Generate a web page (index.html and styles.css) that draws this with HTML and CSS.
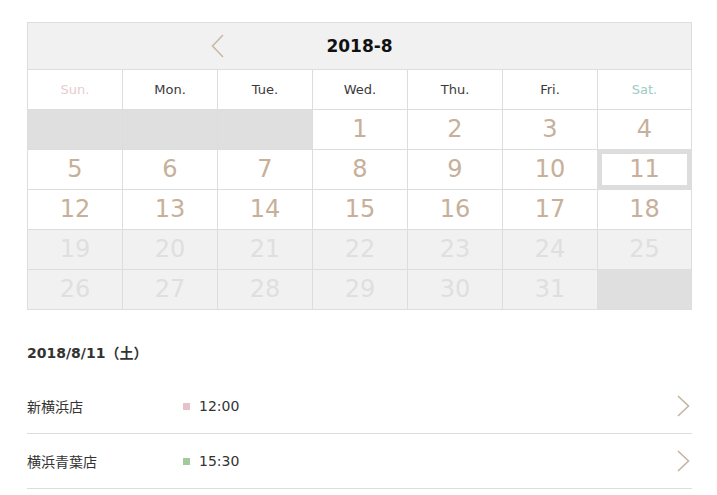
FILE: index.html
```html
<!DOCTYPE html>
<html lang="ja">
<head>
<meta charset="utf-8">
<title>Calendar</title>
<link rel="stylesheet" href="styles.css">
</head>
<body>
<div class="page">
  <div class="calendar">
    <div class="cal-head">
      <span class="nav">
        <svg width="13" height="24" viewBox="0 0 13 24"><polyline points="12,1 1.5,12 12,23" fill="none" stroke="#c9b9a7" stroke-width="1.6"/></svg>
      </span>
      <span class="title">2018-8</span>
      <span class="nav hidden">
        <svg width="13" height="24" viewBox="0 0 13 24"><polyline points="1,1 11.5,12 1,23" fill="none" stroke="#c9b9a7" stroke-width="1.6"/></svg>
      </span>
    </div>
    <div class="grid">
      <div class="dow sun">Sun.</div>
      <div class="dow">Mon.</div>
      <div class="dow">Tue.</div>
      <div class="dow">Wed.</div>
      <div class="dow">Thu.</div>
      <div class="dow">Fri.</div>
      <div class="dow sat">Sat.</div>

      <div class="day blank"></div>
      <div class="day blank"></div>
      <div class="day blank"></div>
      <div class="day">1</div>
      <div class="day">2</div>
      <div class="day">3</div>
      <div class="day">4</div>

      <div class="day">5</div>
      <div class="day">6</div>
      <div class="day">7</div>
      <div class="day">8</div>
      <div class="day">9</div>
      <div class="day">10</div>
      <div class="day selected">11</div>

      <div class="day">12</div>
      <div class="day">13</div>
      <div class="day">14</div>
      <div class="day">15</div>
      <div class="day">16</div>
      <div class="day">17</div>
      <div class="day">18</div>

      <div class="day off">19</div>
      <div class="day off">20</div>
      <div class="day off">21</div>
      <div class="day off">22</div>
      <div class="day off">23</div>
      <div class="day off">24</div>
      <div class="day off">25</div>

      <div class="day off">26</div>
      <div class="day off">27</div>
      <div class="day off">28</div>
      <div class="day off">29</div>
      <div class="day off">30</div>
      <div class="day off">31</div>
      <div class="day blank"></div>
    </div>
  </div>

  <div class="date-head">2018/8/11（土）</div>

  <ul class="list">
    <li class="row">
      <span class="store">新横浜店</span>
      <span class="mark pink"></span>
      <span class="time">12:00</span>
      <svg class="chev" width="13" height="22" viewBox="0 0 13 22"><polyline points="1,1 11.5,11 1,21" fill="none" stroke="#c4b4a2" stroke-width="1.6"/></svg>
    </li>
    <li class="row">
      <span class="store">横浜青葉店</span>
      <span class="mark green"></span>
      <span class="time">15:30</span>
      <svg class="chev" width="13" height="22" viewBox="0 0 13 22"><polyline points="1,1 11.5,11 1,21" fill="none" stroke="#c4b4a2" stroke-width="1.6"/></svg>
    </li>
  </ul>
</div>
</body>
</html>
```

FILE: styles.css
```css
html, body {
  margin: 0;
  padding: 0;
  background: #fff;
}

body {
  font-family: "DejaVu Sans", "Noto Sans CJK JP", sans-serif;
  color: #333;
}

.page {
  padding: 22px 25px 0 27px;
}

.calendar {
  width: 665px;
  border: 1px solid #dddddd;
  box-sizing: border-box;
}

.cal-head {
  height: 46px;
  background: #f1f1f1;
  border-bottom: 1px solid #dddddd;
  display: flex;
  align-items: center;
  justify-content: center;
  gap: 102px;
}

.nav {
  display: flex;
  width: 13px;
  height: 24px;
}

.nav.hidden {
  visibility: hidden;
}

.title {
  font-weight: bold;
  font-size: 17px;
  color: #111;
  width: 67px;
  text-align: center;
}

.grid {
  display: grid;
  grid-template-columns: repeat(6, 94px) 93px;
  grid-auto-rows: 39px;
  gap: 1px;
  background: #dddddd;
}

.dow {
  background: #fff;
  display: flex;
  align-items: center;
  justify-content: center;
  font-size: 13px;
  color: #3a3a3a;
}

.dow.sun {
  color: #e7cbd0;
}

.dow.sat {
  color: #9ccbc5;
}

.day {
  background: #fff;
  display: flex;
  align-items: center;
  justify-content: center;
  padding-bottom: 2px;
  font-size: 24px;
  color: #c7b09a;
}

.day.blank {
  background: #dfdfdf;
}

.day.off {
  background: #f1f1f1;
  color: #dfdfdf;
}

.day.selected {
  box-shadow: inset 0 0 0 4px #dddddd;
}

.date-head {
  height: 54px;
  margin-top: 15px;
  display: flex;
  align-items: center;
  font-weight: bold;
  font-size: 14px;
  color: #333;
}

.list {
  list-style: none;
  margin: 0;
  padding: 0;
  width: 665px;
}

.row {
  height: 54px;
  border-bottom: 1px solid #dddddd;
  display: flex;
  align-items: center;
  font-size: 14px;
  color: #333;
}

.store {
  width: 156px;
}

.mark {
  width: 7px;
  height: 7px;
  margin-right: 9px;
}

.mark.pink {
  background: #e6c3c9;
}

.mark.green {
  background: #a4ca9c;
}

.time {
  flex: 1;
}

.chev {
  margin-right: 2px;
}
```
